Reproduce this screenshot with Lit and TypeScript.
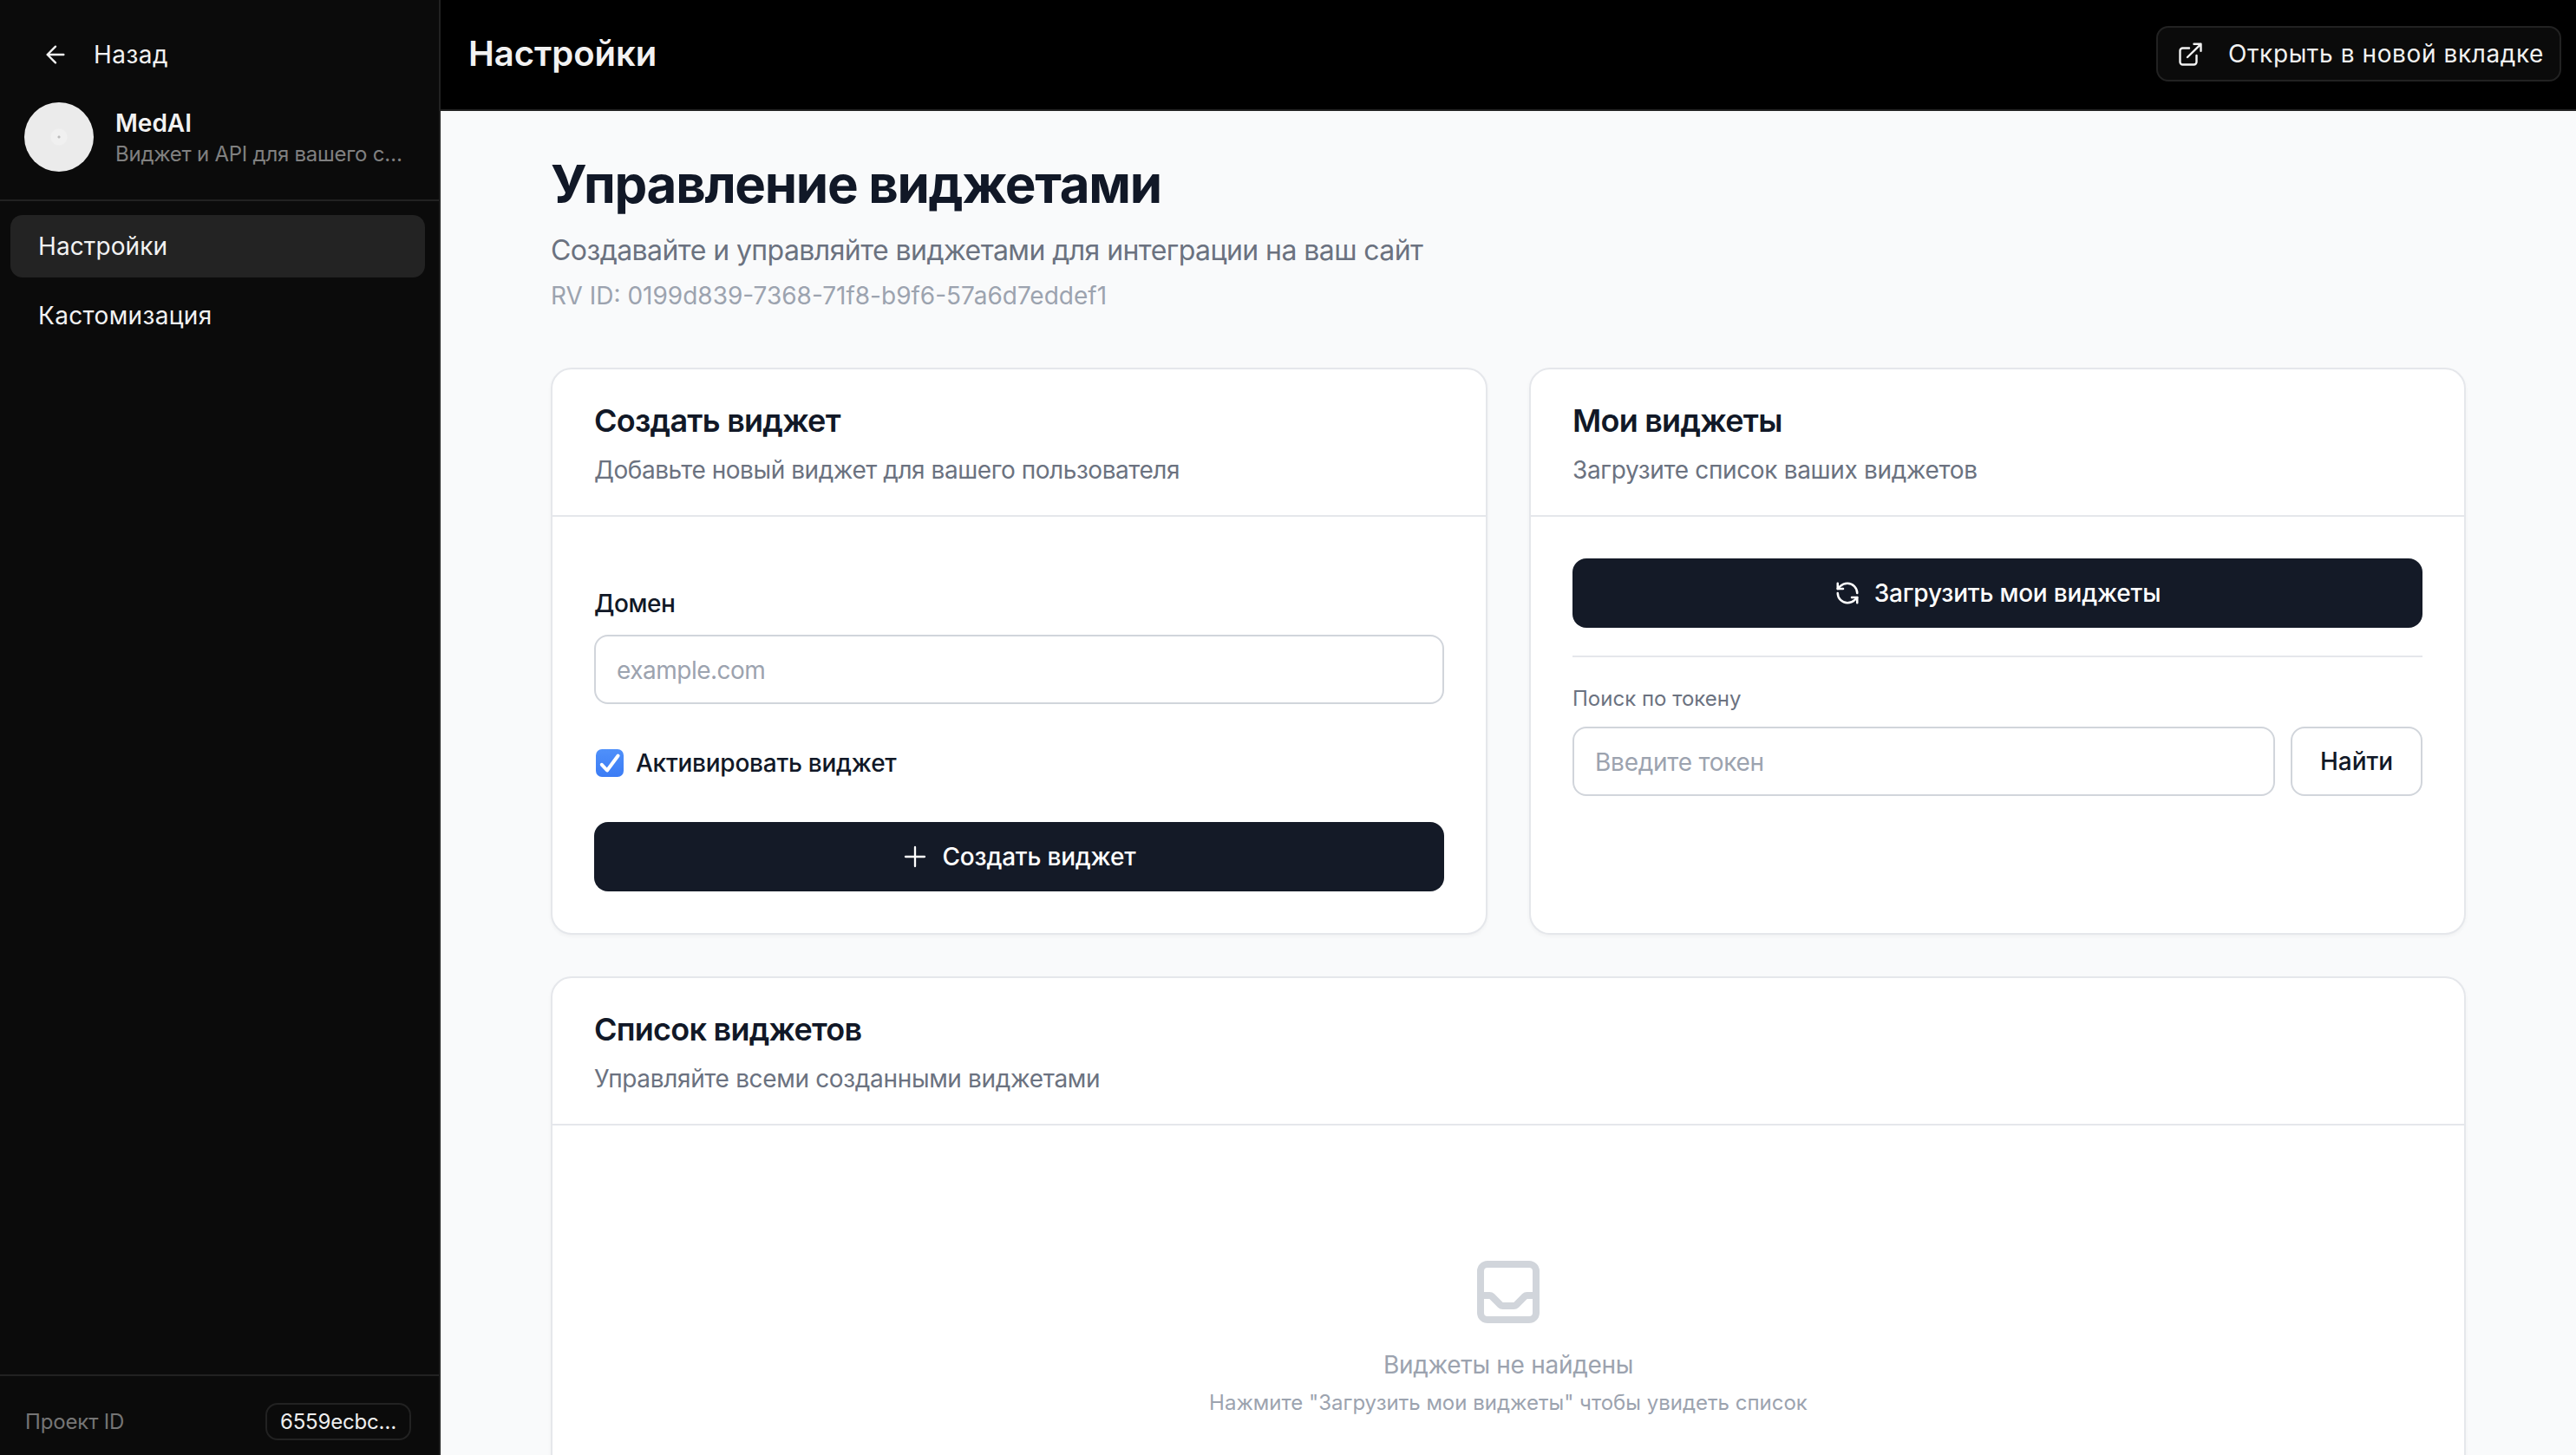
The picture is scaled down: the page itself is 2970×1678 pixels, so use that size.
import { LitElement, css, html } from 'lit';
import { customElement } from 'lit/decorators.js';

const ICON_ARROW = html`<svg class="icon-back" viewBox="0 0 24 24" fill="none" stroke="currentColor" stroke-width="1.8" stroke-linecap="round" stroke-linejoin="round"><path d="M19 12H5M12 19l-7-7 7-7" /></svg>`;
const ICON_EXTERNAL = html`<svg class="icon-ext" viewBox="0 0 28 28" fill="none" stroke="currentColor" stroke-width="2.4" stroke-linecap="round" stroke-linejoin="round"><path d="M21.5 15v7.5a3 3 0 0 1-3 3h-13a3 3 0 0 1-3-3v-13a3 3 0 0 1 3-3H13" /><path d="M18.5 1.8h8v8M26.5 1.8 11 17" /></svg>`;
const ICON_PLUS = html`<svg class="icon-plus" viewBox="0 0 28 28" fill="none" stroke="currentColor" stroke-width="2.3" stroke-linecap="round"><path d="M14 3v22M3 14h22" /></svg>`;
const ICON_REFRESH = html`<svg class="icon-refresh" viewBox="0 0 24 24" fill="none" stroke="currentColor" stroke-width="2" stroke-linecap="round" stroke-linejoin="round"><path d="M21 12a9 9 0 0 0-9-9 9.75 9.75 0 0 0-6.74 2.74L3 8" /><path d="M3 3v5h5" /><path d="M3 12a9 9 0 0 0 9 9 9.75 9.75 0 0 0 6.74-2.74L21 16" /><path d="M16 16h5v5" /></svg>`;
const ICON_INBOX = html`<svg class="icon-empty" viewBox="0 0 24 24" fill="none" stroke="currentColor" stroke-width="2" stroke-linecap="round" stroke-linejoin="round"><path d="M20 13V6a2 2 0 00-2-2H6a2 2 0 00-2 2v7m16 0v5a2 2 0 01-2 2H6a2 2 0 01-2-2v-5m16 0h-2.586a1 1 0 00-.707.293l-2.414 2.414a1 1 0 01-.707.293h-3.172a1 1 0 01-.707-.293l-2.414-2.414A1 1 0 006.586 13H4" /></svg>`;
const ICON_CHECK = html`<svg viewBox="0 0 32 32" fill="none" stroke="#fff" stroke-width="4" stroke-linecap="round" stroke-linejoin="round"><path d="M6.8 17.8 13 24.5 25.6 7.5" /></svg>`;

@customElement('app-root')
export class AppRoot extends LitElement {
  static override styles = css`
    :host {
      display: block;
      width: 2970px;
      height: 1678px;
      overflow: hidden;
      font-family: Inter, 'Liberation Sans', sans-serif;
      background: #f9fafb;
    }

    .app {
      display: flex;
      height: 1678px;
    }

    .sidebar {
      width: 508px;
      flex: none;
      box-sizing: border-box;
      display: flex;
      flex-direction: column;
      background: #0b0b0b;
      border-right: 2px solid #222;
      color: #f2f2f2;
    }

    .back {
      display: flex;
      align-items: center;
      gap: 28px;
      height: 40px;
      margin: 43px 0 35px 48px;
      font-size: 28px;
      line-height: 40px;
      letter-spacing: 0.5px;
    }

    .icon-back {
      width: 32px;
      height: 32px;
    }

    .brand {
      display: flex;
      align-items: center;
      gap: 25px;
      padding: 0 28px;
      height: 80px;
    }

    .avatar {
      width: 80px;
      height: 80px;
      flex: none;
      border-radius: 50%;
      background: radial-gradient(circle, #bbb 0 1px, #f0f0f0 2px 9px, #ebebeb 10px);
    }

    .brand-text {
      min-width: 0;
      flex: 1;
      padding-top: 1px;
    }

    .brand-name {
      font-size: 28px;
      line-height: 38px;
      font-weight: 600;
    }

    .brand-sub {
      margin-top: 1px;
      font-size: 24px;
      line-height: 32px;
      color: #808080;
      white-space: nowrap;
      letter-spacing: -0.25px;
    }

    .nav {
      flex: 1;
      border-top: 2px solid #222;
      margin-top: 32px;
      padding: 16px 16px 0 12px;
    }

    .nav-item {
      height: 72px;
      display: flex;
      align-items: center;
      padding: 0 32px;
      margin-bottom: 8px;
      border-radius: 14px;
      font-size: 28px;
      letter-spacing: 0.1px;
    }

    .nav-item.active {
      background: #232323;
    }

    .nav-item.wide {
      letter-spacing: 0.35px;
    }

    .side-foot {
      height: 93px;
      box-sizing: border-box;
      border-top: 2px solid #222;
      display: flex;
      align-items: center;
      justify-content: space-between;
      padding: 14px 32px 0 29px;
    }

    .side-foot span {
      font-size: 24px;
      color: #757575;
      letter-spacing: -0.15px;
    }

    .chip {
      height: 43px;
      box-sizing: border-box;
      display: flex;
      align-items: center;
      padding: 0 15px;
      border: 2px solid #222;
      border-radius: 14px;
      font-size: 24px;
      letter-spacing: -0.2px;
      color: #eee;
    }

    .main {
      flex: 1;
      min-width: 0;
      display: flex;
      flex-direction: column;
    }

    .topbar {
      height: 128px;
      flex: none;
      box-sizing: border-box;
      display: flex;
      align-items: center;
      justify-content: space-between;
      padding: 0 17px 3px 32px;
      background: #000;
      border-bottom: 2px solid #222;
      color: #f2f2f2;
    }

    .topbar h2 {
      margin: 0;
      font-size: 40px;
      font-weight: 600;
    }

    .open-btn {
      height: 64px;
      box-sizing: border-box;
      display: flex;
      align-items: center;
      gap: 30px;
      padding: 0 18px 0 23px;
      background: #0b0b0b;
      border: 2px solid #222;
      border-radius: 14px;
      font-size: 28px;
      letter-spacing: 0.6px;
    }

    .icon-ext {
      width: 28px;
      height: 28px;
      margin-top: 2px;
    }

    .content {
      padding: 46px 127px 0 127px;
    }

    h1 {
      margin: 0;
      font-size: 60px;
      line-height: 76px;
      font-weight: 700;
      letter-spacing: -1.3px;
      color: #111827;
    }

    .lead {
      margin: 15px 0 0;
      font-size: 32px;
      line-height: 48px;
      letter-spacing: -0.57px;
      color: #6b7280;
    }

    .rv {
      margin: 8px 0 0;
      font-size: 28px;
      line-height: 40px;
      color: #9ca3af;
    }

    .grid {
      display: grid;
      grid-template-columns: 1fr 1fr;
      gap: 48px;
      margin-top: 63px;
    }

    .card {
      background: #fff;
      border: 2px solid #e5e7eb;
      border-radius: 24px;
      box-shadow: 0 2px 4px rgba(0, 0, 0, 0.04);
      box-sizing: border-box;
    }

    .card-head {
      height: 170px;
      box-sizing: border-box;
      padding: 35px 48px 0;
      border-bottom: 2px solid #e5e7eb;
    }

    .card-head h3 {
      margin: 0;
      font-size: 36px;
      line-height: 48px;
      font-weight: 600;
      letter-spacing: -0.75px;
      color: #111827;
    }

    .card-head p {
      margin: 13px 0 0;
      font-size: 28px;
      line-height: 40px;
      letter-spacing: -0.34px;
      color: #6b7280;
    }

    .card-head p.tight {
      letter-spacing: -0.45px;
    }

    .card-body {
      padding: 48px;
    }

    .card-body.form {
      padding-top: 80px;
    }

    .label {
      display: block;
      font-size: 28px;
      line-height: 40px;
      font-weight: 500;
      letter-spacing: -0.4px;
      color: #111827;
    }

    .input {
      height: 80px;
      box-sizing: border-box;
      display: flex;
      align-items: center;
      padding: 1px 24px 0;
      border: 2px solid #d1d5db;
      border-radius: 16px;
      background: #fff;
      font-size: 28px;
      letter-spacing: -0.25px;
      color: #9ca3af;
    }

    .form .input {
      margin-top: 16px;
      letter-spacing: -0.5px;
    }

    .check-row {
      display: flex;
      align-items: center;
      gap: 14px;
      margin-top: 48px;
      height: 40px;
      font-size: 28px;
      font-weight: 500;
      letter-spacing: -0.25px;
      color: #111827;
    }

    .checkbox {
      width: 32px;
      height: 32px;
      margin-left: 2px;
      border-radius: 7px;
      background: linear-gradient(#4f90fa, #3b7cf5);
    }

    .checkbox svg {
      display: block;
    }

    .primary {
      height: 80px;
      display: flex;
      align-items: center;
      justify-content: center;
      gap: 18px;
      background: #141a27;
      color: #fff;
      border-radius: 16px;
      font-size: 28px;
      font-weight: 500;
      letter-spacing: -0.2px;
    }

    .primary.load {
      gap: 16px;
    }

    .form .primary {
      margin-top: 48px;
    }

    .icon-plus {
      width: 28px;
      height: 28px;
    }

    .icon-refresh {
      width: 30px;
      height: 30px;
    }

    .rule {
      height: 2px;
      margin: 32px 0 0;
      background: #e5e7eb;
    }

    .small-label {
      margin: 32px 0 16px;
      font-size: 24px;
      line-height: 32px;
      color: #6b7280;
    }

    .search {
      display: flex;
      gap: 18px;
    }

    .search .input {
      flex: 1;
    }

    .find {
      width: 152px;
      height: 80px;
      box-sizing: border-box;
      display: flex;
      align-items: center;
      justify-content: center;
      border: 2px solid #d1d5db;
      border-radius: 16px;
      font-size: 28px;
      font-weight: 500;
      color: #111827;
    }

    .list {
      margin-top: 48px;
    }

    .empty {
      display: flex;
      flex-direction: column;
      align-items: center;
      padding: 144px 0;
      color: #9ca3af;
    }

    .icon-empty {
      width: 96px;
      height: 96px;
      color: #d1d5db;
    }

    .empty-title {
      margin-top: 16px;
      font-size: 28px;
      line-height: 40px;
      letter-spacing: -0.3px;
    }

    .empty-sub {
      margin-top: 8px;
      font-size: 24px;
      line-height: 32px;
    }
  `;

  override render() {
    return html`
      <div class="app">
        <aside class="sidebar">
          <div class="back">${ICON_ARROW}<span>Назад</span></div>
          <div class="brand">
            <div class="avatar"></div>
            <div class="brand-text">
              <div class="brand-name">MedAI</div>
              <div class="brand-sub">Виджет и API для вашего с…</div>
            </div>
          </div>
          <nav class="nav">
            <div class="nav-item active">Настройки</div>
            <div class="nav-item wide">Кастомизация</div>
          </nav>
          <div class="side-foot">
            <span>Проект ID</span>
            <div class="chip">6559ecbc…</div>
          </div>
        </aside>
        <div class="main">
          <header class="topbar">
            <h2>Настройки</h2>
            <div class="open-btn">${ICON_EXTERNAL}<span>Открыть в новой вкладке</span></div>
          </header>
          <div class="content">
            <h1>Управление виджетами</h1>
            <p class="lead">Создавайте и управляйте виджетами для интеграции на ваш сайт</p>
            <p class="rv">RV ID: 0199d839-7368-71f8-b9f6-57a6d7eddef1</p>
            <div class="grid">
              <section class="card">
                <div class="card-head">
                  <h3>Создать виджет</h3>
                  <p class="tight">Добавьте новый виджет для вашего пользователя</p>
                </div>
                <div class="card-body form">
                  <label class="label">Домен</label>
                  <div class="input">example.com</div>
                  <div class="check-row">
                    <div class="checkbox">${ICON_CHECK}</div>
                    <span>Активировать виджет</span>
                  </div>
                  <div class="primary">${ICON_PLUS}<span>Создать виджет</span></div>
                </div>
              </section>
              <section class="card">
                <div class="card-head">
                  <h3>Мои виджеты</h3>
                  <p>Загрузите список ваших виджетов</p>
                </div>
                <div class="card-body">
                  <div class="primary load">${ICON_REFRESH}<span>Загрузить мои виджеты</span></div>
                  <div class="rule"></div>
                  <div class="small-label">Поиск по токену</div>
                  <div class="search">
                    <div class="input">Введите токен</div>
                    <div class="find">Найти</div>
                  </div>
                </div>
              </section>
            </div>
            <section class="card list">
              <div class="card-head">
                <h3>Список виджетов</h3>
                <p>Управляйте всеми созданными виджетами</p>
              </div>
              <div class="empty">
                ${ICON_INBOX}
                <div class="empty-title">Виджеты не найдены</div>
                <div class="empty-sub">Нажмите "Загрузить мои виджеты" чтобы увидеть список</div>
              </div>
            </section>
          </div>
        </div>
      </div>
    `;
  }
}

declare global {
  interface HTMLElementTagNameMap {
    'app-root': AppRoot;
  }
}
